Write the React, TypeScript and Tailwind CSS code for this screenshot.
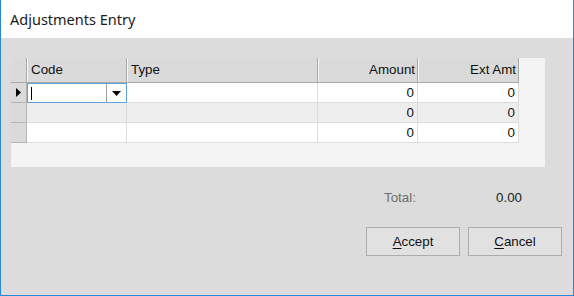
import { ReactNode } from "react";

const font = { fontFamily: '"Liberation Sans", Arial, sans-serif' };

const cols = ["w-[100px]", "w-[191px]", "w-[100px]", "w-[101px]"];

function HeaderCell({ children, w, right }: { children: ReactNode; w: string; right?: boolean }) {
  return (
    <div
      className={`${w} h-full flex items-center border-r border-r-[#a9a9a9] shadow-[inset_1px_0_0_#f7f7f7] ${
        right ? "justify-end pr-[2px]" : "pl-[4px]"
      }`}
    >
      {children}
    </div>
  );
}

function Row({ alt, active }: { alt?: boolean; active?: boolean }) {
  const bg = alt ? "bg-[#ededed]" : "bg-white";
  return (
    <div className="flex h-[20px]">
      <div className="w-[16px] h-full bg-[#dadada] border-r border-b border-[#b4b4b4] flex items-center justify-center">
        {active && (
          <svg width="5" height="9" viewBox="0 0 5 9">
            <path d="M0 0 L5 4.5 L0 9 Z" fill="#000" />
          </svg>
        )}
      </div>
      {active ? (
        <div className="w-[100px] h-full bg-white border border-[#5fa2dd] flex">
          <div className="flex-1 flex items-center pl-[3px]">
            <div className="w-px h-[13px] bg-black" />
          </div>
          <div className="w-[20px] h-full border-l border-[#a0a0a0] flex items-center justify-center">
            <svg width="9" height="5" viewBox="0 0 9 5">
              <path d="M0 0 L9 0 L4.5 5 Z" fill="#000" />
            </svg>
          </div>
        </div>
      ) : (
        <div className={`${cols[0]} h-full ${bg} border-r border-b border-[#dcdcdc]`} />
      )}
      <div className={`${cols[1]} h-full ${bg} border-r border-b border-[#dcdcdc]`} />
      <div className={`${cols[2]} h-full ${bg} border-r border-b border-[#dcdcdc] flex items-center justify-end pr-[3px]`}>
        0
      </div>
      <div className={`${cols[3]} h-full ${bg} border-r border-b border-[#dcdcdc] flex items-center justify-end pr-[3px]`}>
        0
      </div>
    </div>
  );
}

export default function App() {
  return (
    <div className="w-[574px] h-[296px] flex flex-col border-x border-b border-[#2b88d8] bg-[#dcdcdc]">
      <div className="h-[38px] bg-white flex items-center pl-[9px] pt-[2px]">
        <span className="text-[14.5px] text-[#1a1a1a]" style={{ fontFamily: '"Noto Sans", "Open Sans", sans-serif' }}>
          Adjustments Entry
        </span>
      </div>
      <div className="flex-1 flex flex-col pl-[10px] pt-[20px] text-[13.33px] text-[#111]" style={font}>
        <div className="w-[534px] h-[109px] bg-[#f4f4f4]">
          <div className="flex h-[25px] bg-[#dadada] border-b border-[#a9a9a9] w-[508px]">
            <div className="w-[16px] h-full border-r border-r-[#a9a9a9]" />
            <HeaderCell w={cols[0]}>Code</HeaderCell>
            <HeaderCell w={cols[1]}>Type</HeaderCell>
            <HeaderCell w={cols[2]} right>
              Amount
            </HeaderCell>
            <HeaderCell w={cols[3]} right>
              Ext Amt
            </HeaderCell>
          </div>
          <Row active />
          <Row alt />
          <Row />
        </div>
        <div className="flex h-[42px] items-center pt-[19px] pr-[51px] justify-end">
          <span className="text-[#6e6e6e] w-[112px]">Total:</span>
          <span className="text-[#222]">0.00</span>
        </div>
        <div className="flex justify-end gap-[8px] pr-[11px] pt-[18px]">
          <button className="w-[94px] h-[29px] bg-[#e1e1e1] border border-[#adadad] text-[13.33px] text-[#111]">
            <span className="underline underline-offset-2">A</span>ccept
          </button>
          <button className="w-[94px] h-[29px] bg-[#e1e1e1] border border-[#adadad] text-[13.33px] text-[#111]">
            <span className="underline underline-offset-2">C</span>ancel
          </button>
        </div>
      </div>
    </div>
  );
}
